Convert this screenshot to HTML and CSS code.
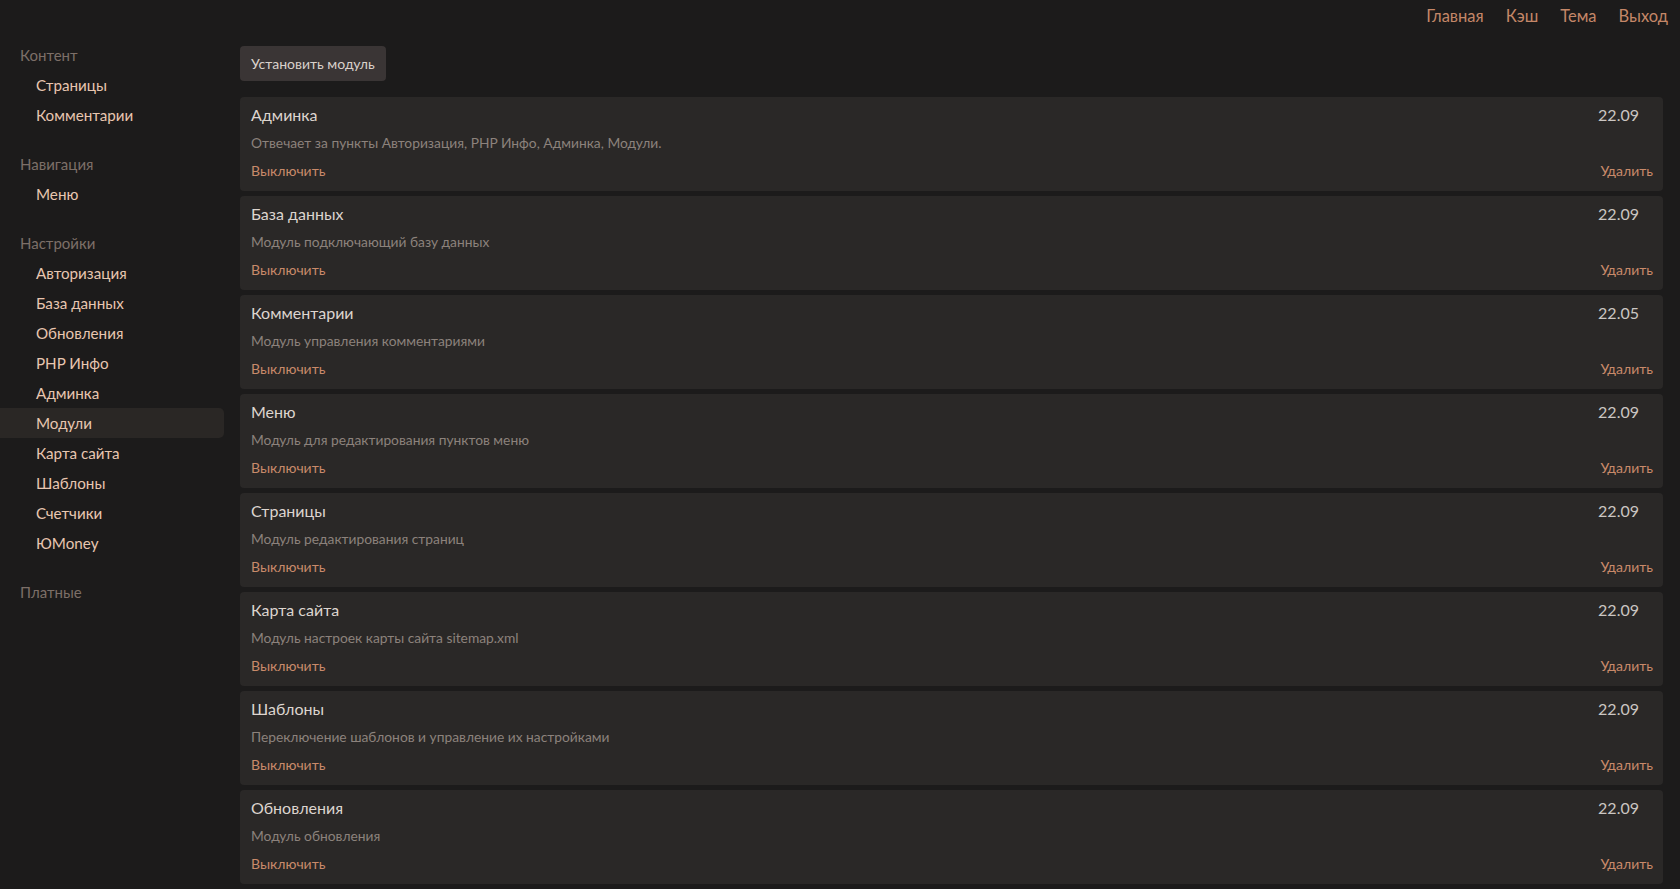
FILE: index.html
```html
<!DOCTYPE html>
<html lang="ru">
<head>
    <meta charset="UTF-8">
    <title>Модули</title>
    <link rel="stylesheet" href="styles.css">
</head>
<body>
<div class="topbar">
    <a href="#">Главная</a>
    <a href="#">Кэш</a>
    <a href="#">Тема</a>
    <a href="#">Выход</a>
</div>
<div class="layout">
    <div class="sidebar">
        <div class="group">
            <div class="group-title">Контент</div>
            <a class="item" href="#">Страницы</a>
            <a class="item" href="#">Комментарии</a>
        </div>
        <div class="group">
            <div class="group-title">Навигация</div>
            <a class="item" href="#">Меню</a>
        </div>
        <div class="group">
            <div class="group-title">Настройки</div>
            <a class="item" href="#">Авторизация</a>
            <a class="item" href="#">База данных</a>
            <a class="item" href="#">Обновления</a>
            <a class="item" href="#">PHP Инфо</a>
            <a class="item" href="#">Админка</a>
            <a class="item active" href="#">Модули</a>
            <a class="item" href="#">Карта сайта</a>
            <a class="item" href="#">Шаблоны</a>
            <a class="item" href="#">Счетчики</a>
            <a class="item" href="#">ЮMoney</a>
        </div>
        <div class="group">
            <div class="group-title">Платные</div>
        </div>
    </div>
    <div class="content">
        <div><button class="btn">Установить модуль</button></div>
        <div class="modules">
            <div class="module">
                <div class="row"><span class="title">Админка</span><span class="ver">22.09</span></div>
                <div class="desc">Отвечает за пункты Авторизация, PHP Инфо, Админка, Модули.</div>
                <div class="row"><a href="#">Выключить</a><a href="#">Удалить</a></div>
            </div>
            <div class="module">
                <div class="row"><span class="title">База данных</span><span class="ver">22.09</span></div>
                <div class="desc">Модуль подключающий базу данных</div>
                <div class="row"><a href="#">Выключить</a><a href="#">Удалить</a></div>
            </div>
            <div class="module">
                <div class="row"><span class="title">Комментарии</span><span class="ver">22.05</span></div>
                <div class="desc">Модуль управления комментариями</div>
                <div class="row"><a href="#">Выключить</a><a href="#">Удалить</a></div>
            </div>
            <div class="module">
                <div class="row"><span class="title">Меню</span><span class="ver">22.09</span></div>
                <div class="desc">Модуль для редактирования пунктов меню</div>
                <div class="row"><a href="#">Выключить</a><a href="#">Удалить</a></div>
            </div>
            <div class="module">
                <div class="row"><span class="title">Страницы</span><span class="ver">22.09</span></div>
                <div class="desc">Модуль редактирования страниц</div>
                <div class="row"><a href="#">Выключить</a><a href="#">Удалить</a></div>
            </div>
            <div class="module">
                <div class="row"><span class="title">Карта сайта</span><span class="ver">22.09</span></div>
                <div class="desc">Модуль настроек карты сайта sitemap.xml</div>
                <div class="row"><a href="#">Выключить</a><a href="#">Удалить</a></div>
            </div>
            <div class="module">
                <div class="row"><span class="title">Шаблоны</span><span class="ver">22.09</span></div>
                <div class="desc">Переключение шаблонов и управление их настройками</div>
                <div class="row"><a href="#">Выключить</a><a href="#">Удалить</a></div>
            </div>
            <div class="module">
                <div class="row"><span class="title">Обновления</span><span class="ver">22.09</span></div>
                <div class="desc">Модуль обновления</div>
                <div class="row"><a href="#">Выключить</a><a href="#">Удалить</a></div>
            </div>
        </div>
    </div>
</div>
</body>
</html>
```
FILE: styles.css
```css
body {
    margin: 0;
    background: #1c1b1b;
    font-family: Lato, "Noto Sans", sans-serif;
    color: #ddd5cf;
}
a {
    text-decoration: none;
}

.topbar {
    display: flex;
    justify-content: flex-end;
    gap: 22px;
    height: 32px;
    align-items: center;
    padding-right: 12px;
}
.topbar a {
    color: #c48768;
    font-size: 16.5px;
}

.layout {
    display: grid;
    grid-template-columns: 224px 1fr;
    gap: 16px;
    padding-right: 17px;
}

.sidebar {
    padding-top: 8px;
}
.group {
    margin-bottom: 19px;
}
.group-title {
    height: 30px;
    line-height: 30px;
    padding-left: 20px;
    color: #7c6f68;
    font-size: 15px;
}
.item {
    display: block;
    height: 30px;
    line-height: 30px;
    padding-left: 36px;
    color: #e8c6b0;
    font-size: 15.2px;
    border-radius: 0 5px 5px 0;
}
.item.active {
    background: #2a2725;
}

.content {
    padding-top: 14px;
}
.btn {
    background: #3a3535;
    color: #d9d1cb;
    border: none;
    border-radius: 4px;
    height: 35px;
    padding: 0 11px;
    font-family: inherit;
    font-size: 14px;
}

.modules {
    margin-top: 16px;
    display: flex;
    flex-direction: column;
    gap: 5px;
}
.module {
    background: #2a2827;
    border-radius: 4px;
    padding: 4px 10px 6px 11px;
}
.row {
    display: flex;
    justify-content: space-between;
    height: 28px;
    line-height: 28px;
}
.title {
    font-size: 16px;
    color: #ddd5cf;
}
.ver {
    font-size: 16px;
    color: #cbc6c2;
    margin-right: 14px;
}
.desc {
    height: 28px;
    line-height: 28px;
    font-size: 13.8px;
    color: #8c827c;
}
.row a {
    color: #c88a6a;
    font-size: 14px;
}
```
